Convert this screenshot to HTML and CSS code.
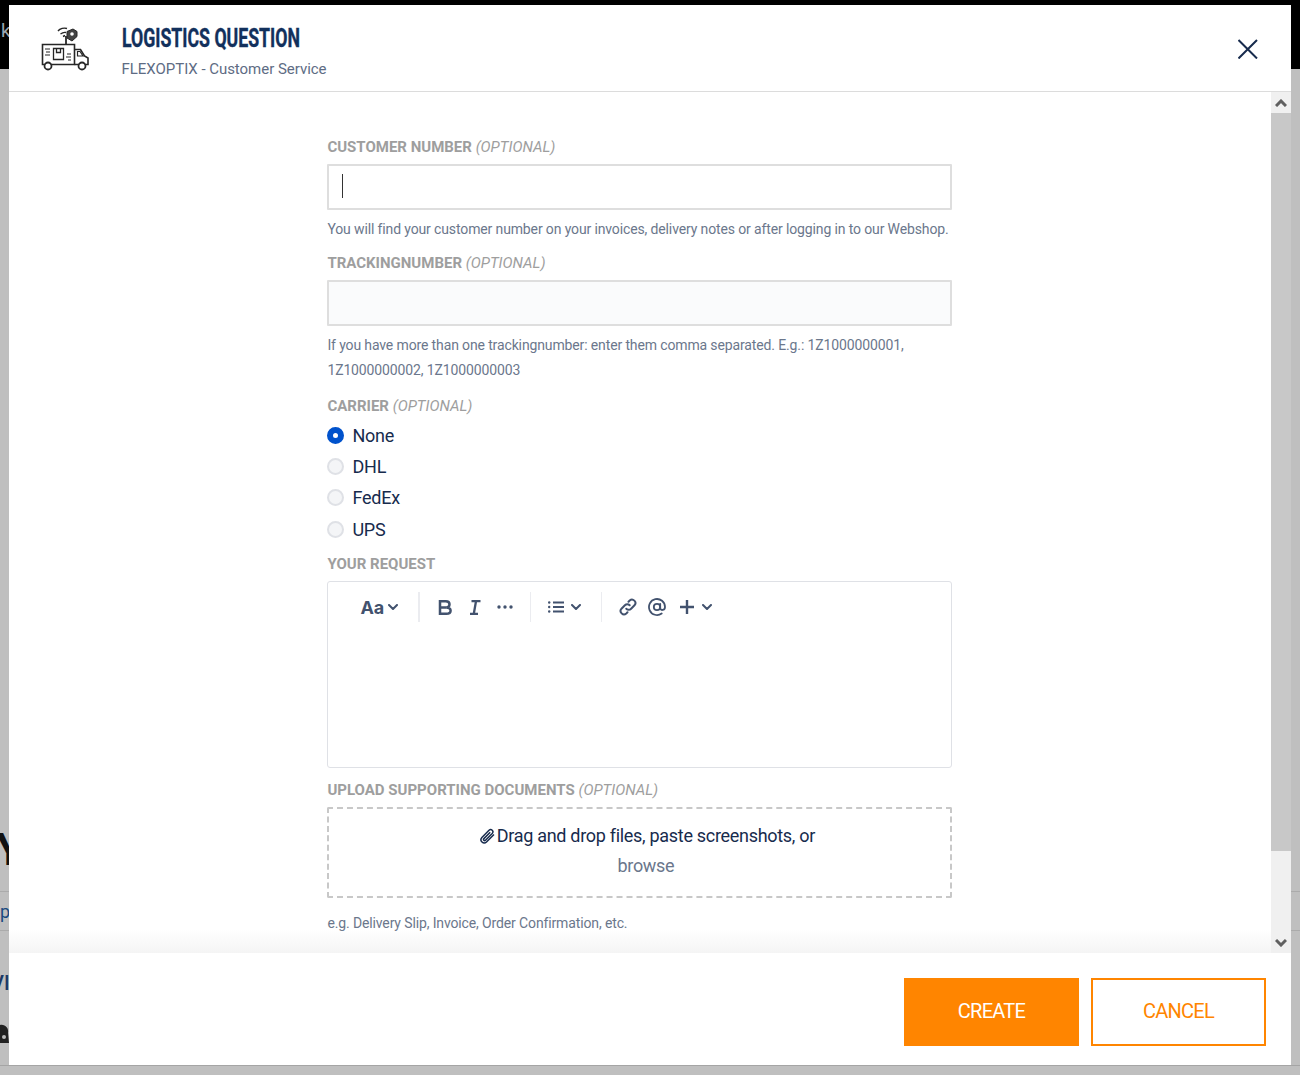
FILE: index.html
```html
<!DOCTYPE html>
<html lang="en">
<head>
<meta charset="utf-8">
<title>Logistics question</title>
<link rel="stylesheet" href="styles.css">
</head>
<body>
<div class="page">
  <div class="page-top"><span class="page-k">k</span></div>
  <div class="page-hero"><span class="page-y">Y</span></div>
  <div class="page-row page-row-p"><span>p</span></div>
  <div class="page-row page-row-v">
    <span class="page-v">VI</span>
    <svg class="page-ico" viewBox="0 0 10 22" width="10" height="22"><path d="M0 1c5-1 9 3 8 8l1 10H0z" fill="#222"/><circle cx="4" cy="13" r="2" fill="#bbb"/></svg>
  </div>
  <div class="page-end"></div>
</div>
<div class="modal">
  <header class="modal-head">
    <svg class="truck" viewBox="0 0 48 44" width="48" height="44" fill="none" stroke="#262626" stroke-width="1.6">
      <path d="M1.500 17.500h32v20H1.500z"/>
      <path d="M33.500 22.500h6l4 6.500 3.500 2v6.500H33.500"/>
      <path d="M36.500 24.500h2.500l3 4.500h-5.500z" stroke-width="1.200"/>
      <circle cx="7" cy="39" r="3.500" fill="#fff" stroke-width="1.800"/>
      <circle cx="41" cy="39" r="3.500" fill="#fff" stroke-width="1.800"/>
      <path d="M12.500 21.500h10v11h-10zM15.500 21.500v4h4v-4z" stroke-width="1.300"/>
      <path d="M4 22h5M5 25h4M4 28h5M26 27h4M25 30h5M27 33h3" stroke-width="1.200"/>
      <path d="M25 17V9" stroke-width="1.800"/>
      <path d="M26 4.500l6-2.500 4 2.500v5l-5 4.500-5-3z" fill="#444" stroke-width="1"/>
      <circle cx="31" cy="7" r="1.800" fill="#fff" stroke="none"/>
      <path d="M17 4c2-2.500 6-3.500 9-2.500M19.500 7c2-1.500 3.500-2 5.500-1.500M22 9.500l2-1" stroke-width="1.400"/>
    </svg>
    <div class="head-text">
      <h1 class="head-title">LOGISTICS QUESTION</h1>
      <p class="head-sub">FLEXOPTIX - Customer Service</p>
    </div>
    <svg class="close" viewBox="0 0 20 20" width="20" height="20" fill="none" stroke="#172b4d" stroke-width="2">
      <path d="M.5 1L19 19.500M19 1L.5 19.500"/>
    </svg>
  </header>

  <div class="modal-mid">
    <div class="scroll-body">
      <form class="form">
        <label class="label">CUSTOMER NUMBER <em>(OPTIONAL)</em></label>
        <div class="input input-focus"><span class="caret"></span></div>
        <p class="help">You will find your customer number on your invoices, delivery notes or after logging in to our Webshop.</p>

        <label class="label label-track">TRACKINGNUMBER <em>(OPTIONAL)</em></label>
        <div class="input input-idle"></div>
        <p class="help help-tall">If you have more than one trackingnumber: enter them comma separated. E.g.: 1Z1000000001, 1Z1000000002, 1Z1000000003</p>

        <label class="label label-carrier">CARRIER <em>(OPTIONAL)</em></label>
        <div class="radios">
          <div class="radio-row"><span class="radio radio-on"></span>None</div>
          <div class="radio-row"><span class="radio"></span>DHL</div>
          <div class="radio-row"><span class="radio"></span>FedEx</div>
          <div class="radio-row radio-row-last"><span class="radio"></span>UPS</div>
        </div>

        <label class="label label-request">YOUR REQUEST</label>
        <div class="editor">
          <div class="toolbar">
            <div class="tool-group tool-text">
              <span class="aa">Aa</span>
              <svg class="chev" viewBox="0 0 10 6" width="10" height="6"><path d="M1 1l4 4 4-4"/></svg>
            </div>
            <div class="tool-group tool-format">
              <svg class="ico-b" viewBox="0 0 14 15" width="14" height="15"><path d="M2 1.300h5.800c2.200 0 3.700 1.100 3.700 3 0 1.700-1.200 3.100-3.400 3.100 2.800 0 4.500 1.300 4.500 3.300 0 2-1.600 3-4.200 3H2zM2 7.400h6"/></svg>
              <svg class="ico-i" viewBox="0 0 12 15" width="12" height="15"><path d="M2.500 1.200h9M1 13.800h8M7 1.200L4.800 13.800"/></svg>
              <svg class="ico-dots" viewBox="0 0 16 4" width="16" height="4"><circle cx="2" cy="2" r="1.700"/><circle cx="8" cy="2" r="1.700"/><circle cx="14" cy="2" r="1.700"/></svg>
            </div>
            <div class="tool-group tool-list">
              <svg class="ico-list" viewBox="0 0 16 12" width="16" height="12"><path d="M5 1.500h11M5 6h11M5 10.500h11"/><circle cx="1.200" cy="1.500" r="1.200"/><circle cx="1.200" cy="6" r="1.200"/><circle cx="1.200" cy="10.500" r="1.200"/></svg>
              <svg class="chev" viewBox="0 0 10 6" width="10" height="6"><path d="M1 1l4 4 4-4"/></svg>
            </div>
            <div class="tool-group tool-insert">
              <svg class="ico-link" viewBox="0 0 18 18" width="18" height="18"><path d="M7.300 10.700a3.400 3.400 0 0 0 4.800 0l3.400-3.400a3.400 3.400 0 0 0-4.800-4.800L9.500 3.700"/><path d="M10.700 7.300a3.400 3.400 0 0 0-4.800 0l-3.400 3.400a3.400 3.400 0 0 0 4.800 4.800l1.200-1.200"/></svg>
              <svg class="ico-at" viewBox="0 0 18 18" width="18" height="18"><circle cx="9" cy="9" r="3.200"/><path d="M12.200 5.800V10c0 2.800 4.800 2.800 4.800-1a8 8 0 1 0-3.300 6.500"/></svg>
              <svg class="ico-plus" viewBox="0 0 16 16" width="16" height="16"><path d="M8 1v14M1 8h14"/></svg>
              <svg class="chev" viewBox="0 0 10 6" width="10" height="6"><path d="M1 1l4 4 4-4"/></svg>
            </div>
          </div>
        </div>

        <label class="label label-upload">UPLOAD SUPPORTING DOCUMENTS <em>(OPTIONAL)</em></label>
        <div class="drop">
          <div class="drop-line">
            <svg class="clip" viewBox="0 0 16 16" width="16" height="16" fill="none" stroke="#172b4d" stroke-width="1.500"><path d="M15 6.500l-7.500 7.500c-3 2.800-7.500-1.200-4.600-4.600L10 2.300c2.200-2 5.300 1 3.200 3.200L6.500 12.200c-1.200 1.100-2.700-.4-1.600-1.600l6.300-6.300"/></svg>Drag and drop files, paste screenshots, or
          </div>
          <div class="drop-browse">browse</div>
        </div>
        <p class="help help-last">e.g. Delivery Slip, Invoice, Order Confirmation, etc.</p>
      </form>
      <div class="fade"></div>
    </div>
    <div class="scrollbar">
      <div class="sb-btn"><svg viewBox="0 0 12 8" width="12" height="8"><path d="M1 7l5-5 5 5"/></svg></div>
      <div class="sb-thumb"></div>
      <div class="sb-track"></div>
      <div class="sb-btn"><svg viewBox="0 0 12 8" width="12" height="8"><path d="M1 1l5 5 5-5"/></svg></div>
    </div>
  </div>

  <footer class="modal-foot">
    <button class="btn btn-primary" type="button">CREATE</button>
    <button class="btn btn-ghost" type="button">CANCEL</button>
  </footer>
</div>
</body>
</html>
```
FILE: styles.css
```css
* { box-sizing: border-box; }
html, body { margin: 0; padding: 0; height: 100%; overflow: hidden; }
body { font-family: Roboto, "Liberation Sans", sans-serif; background: #bfbfbf; }

.page { height: 1075px; display: flex; flex-direction: column; overflow: hidden; }
.page-top { height: 69px; flex: none; background: #000; color: #9aa6b0; font-size: 19px; padding: 20px 0 0 1px; line-height: 22px; }
.page-hero { height: 823px; flex: none; display: flex; align-items: flex-end; padding: 0 0 19px 0; border-bottom: 1px solid #ababab; }
.page-y { font-size: 44px; line-height: 44px; font-weight: 700; color: #111; margin-left: -4px; }
.page-row { border-bottom: 1px solid #ababab; flex: none; }
.page-row-p { height: 39px; color: #1b4a80; font-size: 18px; line-height: 39px; }
.page-row-v { height: 135px; display: flex; flex-direction: column; align-items: flex-start; color: #1b3a66; font-size: 20px; line-height: 24px; padding-top: 40px; font-weight: 500; border-bottom-color: #a5a5a5; }
.page-v { margin-left: -9px; }
.page-ico { margin-top: 29px; }
.page-end { flex: 1; }

.modal { position: absolute; left: 9px; top: 5px; width: 1282px; height: 1060px; background: #fff; display: flex; flex-direction: column; }

.modal-head { height: 87px; flex: none; border-bottom: 1px solid #dcdcdc; display: flex; align-items: flex-start; padding: 22px 33px 0 32px; }
.truck { flex: none; margin-right: 33px; }
.head-text { flex: 1; margin-top: -4px; }
.head-title { margin: 0; font-family: Roboto, sans-serif; font-size: 25px; line-height: 32px; font-weight: 700; color: #12305c; width: max-content; transform: scaleX(.708); transform-origin: left center; -webkit-text-stroke: .4px #12305c; }
.head-sub { margin: 5px 0 0 -.5px; font-size: 15px; line-height: 18px; color: #5e6c84; letter-spacing: -.03px; }
.close { flex: none; margin-top: 12px; }

.modal-mid { flex: 1; min-height: 0; display: flex; }
.scroll-body { flex: 1; position: relative; overflow: hidden; }
.form { width: 625px; margin-left: 318.400px; padding-top: 46px; }

.label { display: block; font-size: 15px; line-height: 18px; font-weight: 700; color: #9e9e9e; }
.label em { font-weight: 400; }
.label-track { margin-top: 12px; }
.label-carrier { margin-top: 14px; }
.label-request { margin-top: 10px; }
.label-upload { margin-top: 13px; }

.input { height: 46px; margin-top: 8px; border: 2px solid #dedede; border-radius: 1px; padding: 8px 13px; }
.input-idle { background: #fafbfc; }
.caret { display: block; width: 1px; height: 24px; background: #333; }
.help { margin: 7px 0 0; font-size: 14px; line-height: 25px; color: #6b778c; letter-spacing: -.13px; }
.help-last { margin-top: 13px; }

.radios { margin-top: 5px; }
.radio-row { height: 31px; display: flex; align-items: center; font-size: 18px; color: #172b4d; letter-spacing: -.2px; }
.radio-row-last { height: 32px; margin-bottom: 1px; }
.radio { width: 17px; height: 17px; border-radius: 50%; border: 2px solid #dfe1e6; background: #f4f5f7; margin-right: 8px; }
.radio-on { background: #fff; border: 6px solid #0052cc; }

.editor { height: 187px; margin-top: 8px; border: 1px solid #dfe1e6; border-radius: 3px; padding-top: 10px; }
.toolbar { display: flex; padding-left: 33px; height: 30px; }
.tool-group { display: flex; align-items: center; border-right: 1px solid #ebecf0; height: 30px; }
.tool-text { width: 59px; border-right-width: 2px; }
.tool-format { width: 111px; padding-left: 18px; }
.tool-list { width: 71px; padding-left: 17px; }
.tool-insert { padding-left: 17px; border-right: 0; }
.aa { font-family: Inter, Roboto, sans-serif; font-size: 18px; font-weight: 700; color: #42526e; margin: 0 4px 0 -1px; letter-spacing: -.2px; }
.chev { fill: none; stroke: #42526e; stroke-width: 2; stroke-linecap: round; stroke-linejoin: round; }
.ico-b { fill: none; stroke: #42526e; stroke-width: 2.500; margin-right: 17px; }
.ico-i { fill: none; stroke: #42526e; stroke-width: 2.300; margin-right: 16px; }
.ico-dots { fill: #42526e; }
.ico-list { stroke: none; margin-right: 7px; }
.ico-list path { stroke: #42526e; stroke-width: 2; fill: none; }
.ico-list circle { fill: #42526e; }
.ico-link, .ico-at { fill: none; stroke: #42526e; stroke-width: 2; stroke-linecap: round; }
.ico-link { margin-right: 11px; }
.ico-at { margin-right: 13px; stroke-width: 1.800; }
.ico-plus { fill: none; stroke: #42526e; stroke-width: 2.400; margin-right: 7px; }

.drop { height: 91px; margin-top: 8px; border: 2px dashed #c8c8c8; border-radius: 2px; text-align: center; padding: 13px 0 0 12px; font-size: 18px; letter-spacing: -.3px; }
.drop-line { line-height: 27px; color: #172b4d; display: flex; justify-content: center; align-items: center; padding-left: 2px; }
.clip { margin-right: 2px; }
.drop-browse { line-height: 27px; margin-top: 3px; color: #6b778c; }

.fade { position: absolute; left: 0; right: 0; bottom: 0; height: 24px; background: linear-gradient(to bottom, rgba(240,240,240,0), rgba(240,240,240,.7)); }

.scrollbar { width: 20px; flex: none; display: flex; flex-direction: column; background: #f0f0f0; }
.sb-btn { height: 21px; display: flex; align-items: center; justify-content: center; }
.sb-btn svg { fill: none; stroke: #606060; stroke-width: 3; }
.sb-thumb { height: 738px; background: #c8c8c8; }
.sb-track { flex: 1; }

.modal-foot { height: 112px; flex: none; display: flex; justify-content: flex-end; gap: 12px; padding: 25px 25px 0 0; }
.btn { width: 175px; height: 68px; font-family: Roboto, sans-serif; font-size: 20px; border-radius: 0; letter-spacing: -.75px; padding: 0 0 2px; }
.btn-primary { background: #ff8500; color: #fff; border: 0; }
.btn-ghost { background: #fff; color: #ff8500; border: 2px solid #ff8500; }
```
